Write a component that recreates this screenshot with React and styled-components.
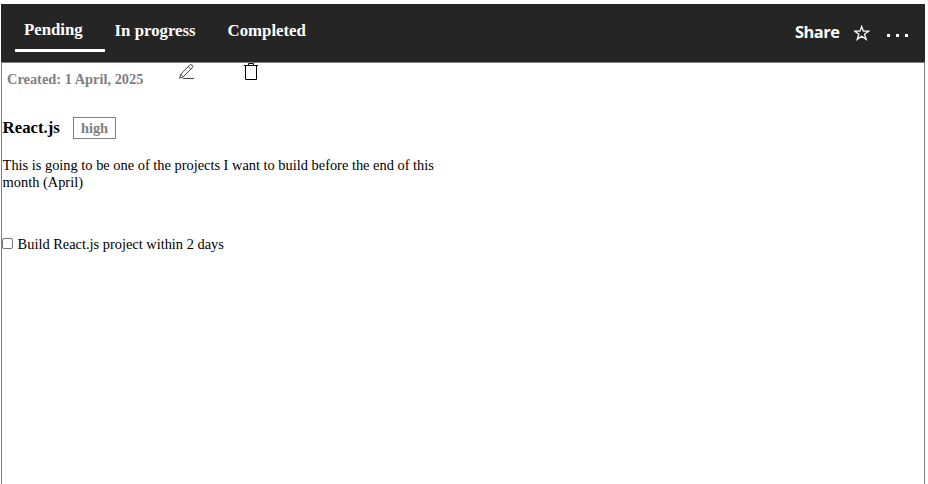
import React, { useState } from "react";
import styled, { createGlobalStyle } from "styled-components";

const GlobalStyle = createGlobalStyle`
  * { box-sizing: border-box; }
  html, body { margin: 0; background: #fff; }
  body {
    overflow: hidden;
    font-family: "Liberation Serif", "Times New Roman", serif;
    color: #000;
  }
`;

const Page = styled.div`
  height: 484px;
  padding: 4px 3px 0 1px;
  display: flex;
  flex-direction: column;
`;

const Header = styled.header`
  flex: none;
  height: 58px;
  background: #252525;
  color: #fff;
  display: flex;
  justify-content: space-between;
`;

const Tabs = styled.nav`
  display: flex;
  align-items: flex-start;
  padding-left: 14px;
`;

const Tab = styled.button`
  font: bold 16.8px/20px "Liberation Serif", "Times New Roman", serif;
  color: inherit;
  background: none;
  border: 0;
  border-bottom: 3px solid ${(p) => (p.$active ? "#fff" : "transparent")};
  height: ${(p) => (p.$active ? 48 : 49)}px;
  width: ${(p) => p.$width}px;
  padding: ${(p) => (p.$active ? "16px 0 9px 9px" : "17px 0 9px 9.6px")};
  text-align: left;
  white-space: nowrap;
`;

const Actions = styled.div`
  display: flex;
  align-items: flex-start;
  padding: 17px 15px 0 0;
`;

const Share = styled.span`
  font: bold 16.4px/22px "Open Sans", "Noto Sans", sans-serif;
  letter-spacing: -0.5px;
  width: 59px;
`;

const StarIcon = styled.svg`
  width: 16px;
  height: 16px;
  margin-top: 4px;
`;

const MoreIcon = styled.svg`
  width: 24px;
  height: 4px;
  margin: 13px 0 0 16px;
`;

const Card = styled.main`
  flex: 1;
  border: 1px solid #808080;
  border-bottom: 0;
  display: flex;
  flex-direction: column;
`;

const Meta = styled.div`
  display: flex;
  height: 54px;
  padding-left: 5px;
`;

const Created = styled.span`
  font-size: 14.4px;
  line-height: 16px;
  font-weight: bold;
  color: #808080;
  padding-top: 8px;
  width: 171px;
`;

const PencilIcon = styled.svg`
  width: 17px;
  height: 17px;
  margin-right: 48px;
`;

const TrashIcon = styled.svg`
  width: 16px;
  height: 18px;
`;

const TitleRow = styled.div`
  display: flex;
  height: 22px;
`;

const Title = styled.h1`
  margin: 0;
  padding-left: 0.6px;
  font-size: 16.8px;
  line-height: 22px;
  width: 71px;
`;

const Priority = styled.span`
  width: 43px;
  height: 22px;
  border: 1px solid #808080;
  color: #808080;
  font-size: 14.4px;
  font-weight: bold;
  line-height: 21px;
  text-align: center;
`;

const Description = styled.p`
  margin: 18px 0 0;
  padding-left: 0.6px;
  width: 440px;
  font-size: 14.4px;
  line-height: 17px;
`;

const Task = styled.label`
  margin-top: 45px;
  display: flex;
  align-items: flex-start;
  font-size: 14.4px;
  line-height: 17px;
`;

const Check = styled.input`
  appearance: none;
  width: 11px;
  height: 11px;
  margin: 2px 4.6px 0 0;
  border: 1px solid #767676;
  border-radius: 2px;
  background: #fff;
  &:checked { background: #0075ff; }
`;

const tabs = [
  { label: "Pending", width: 90 },
  { label: "In progress", width: 113 },
  { label: "Completed", width: 100 },
];

export default function App() {
  const [active, setActive] = useState("Pending");
  return (
    <Page>
      <GlobalStyle />
      <Header>
        <Tabs>
          {tabs.map(({ label, width }) => (
            <Tab key={label} $width={width} $active={active === label} onClick={() => setActive(label)}>
              {label}
            </Tab>
          ))}
        </Tabs>
        <Actions>
          <Share>Share</Share>
          <StarIcon viewBox="0 0 16 16" fill="none" stroke="#fff" strokeWidth="1.3">
            <path d="M7.7 1.5 9.4 6.2H14.7L10.5 9.3 12.2 14.4 7.7 11.3 3.2 14.4 4.9 9.3.7 6.2H6Z" />
          </StarIcon>
          <MoreIcon viewBox="0 0 24 4" fill="#fff">
            <rect x="1" width="3" height="3" />
            <rect x="10" width="3" height="3" />
            <rect x="19" width="3" height="3" />
          </MoreIcon>
        </Actions>
      </Header>
      <Card>
        <Meta>
          <Created>Created: 1 April, 2025</Created>
          <PencilIcon viewBox="0 0 17 17" fill="none" stroke="#333" strokeWidth="0.9">
            <path d="M1.6 15.2 2.7 11.2 11.6 2.2Q13 1 14.2 2.2 15.4 3.4 14.2 4.8L5.3 13.8ZM2.7 11.2l2.6 2.6M10.2 3.6l2.6 2.6M4.8 15.5H16" />
          </PencilIcon>
          <TrashIcon viewBox="0 0 16 18" fill="none" stroke="#000">
            <path d="M1 2.5h14M5.5 2.5v-2h5v2M2.5 2.5v14h11v-14" />
          </TrashIcon>
        </Meta>
        <TitleRow>
          <Title>React.js</Title>
          <Priority>high</Priority>
        </TitleRow>
        <Description>
          This is going to be one of the projects I want to build before the end of this month (April)
        </Description>
        <Task>
          <Check type="checkbox" />
          Build React.js project within 2 days
        </Task>
      </Card>
    </Page>
  );
}
